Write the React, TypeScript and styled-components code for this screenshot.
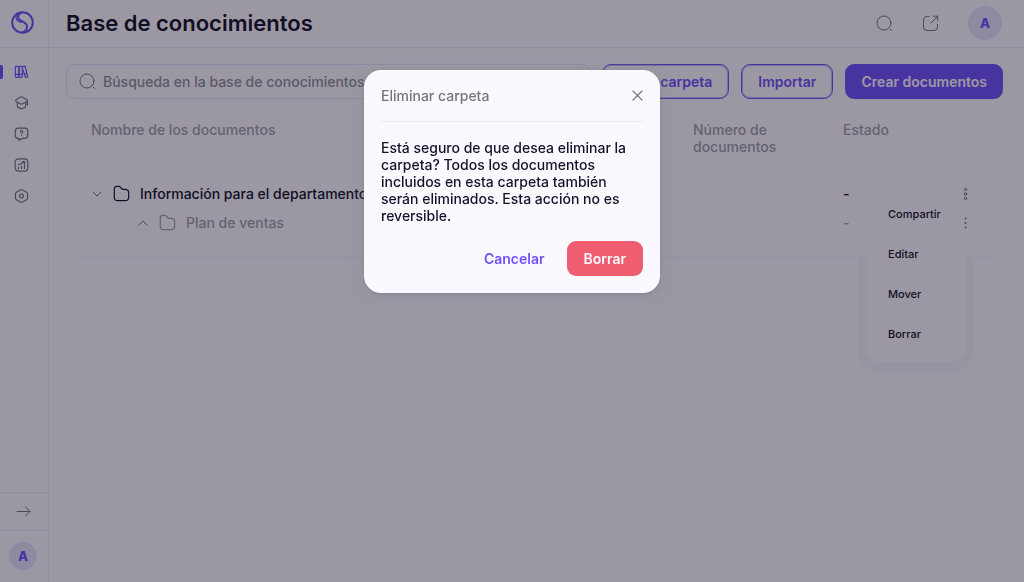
import React from "react";
import styled, { createGlobalStyle } from "styled-components";

const color = {
  surface: "#faf9ff",
  line: "#eae8fb",
  brand: "#7152fa",
  ink: "#16132a",
  muted: "#76757e",
  faint: "#a19fa8",
  danger: "#ef5d70",
};

const GlobalStyle = createGlobalStyle`
  *, *::before, *::after { box-sizing: border-box; }
  body {
    margin: 0;
    background: ${color.surface};
    color: ${color.ink};
    font: 500 14px/17px Inter, "Liberation Sans", sans-serif;
  }
  button, input { font: inherit; color: inherit; }
  button { border: 0; padding: 0; background: none; cursor: pointer; }
  svg { display: block; flex: none; fill: none; stroke: currentColor; stroke-linecap: round; stroke-linejoin: round; }
`;

const Shell = styled.div`
  display: flex;
  min-height: 100vh;
`;

const Sidebar = styled.aside`
  display: flex;
  flex-direction: column;
  flex: 0 0 49px;
  border-right: 1px solid ${color.line};
`;

const LogoLink = styled.a`
  display: flex;
  align-items: center;
  height: 48px;
  padding: 0 0 2px 10px;
  border-bottom: 1px solid ${color.line};
  color: ${color.brand};
`;

const SideNav = styled.nav`
  display: flex;
  flex-direction: column;
  flex: 1;
  gap: 15px;
  padding-top: 16px;
`;

const SideLink = styled.a<{ $active?: boolean }>`
  position: relative;
  display: flex;
  align-items: center;
  height: 16px;
  padding-left: 14px;
  color: ${(p) => (p.$active ? color.brand : color.muted)};
  &::before {
    content: "";
    display: ${(p) => (p.$active ? "block" : "none")};
    position: absolute;
    left: 0;
    width: 3px;
    height: 14px;
    border-radius: 0 2px 2px 0;
    background: ${color.brand};
  }
`;

const ExpandButton = styled.button`
  display: flex;
  align-items: center;
  height: 39px;
  padding-left: 16px;
  border-top: 1px solid ${color.line};
  border-bottom: 1px solid ${color.line};
  color: ${color.muted};
`;

const SideAccount = styled.div`
  padding: 11px 0 12px 9px;
`;

const Avatar = styled.button<{ $size: number }>`
  display: block;
  width: ${(p) => p.$size}px;
  height: ${(p) => p.$size}px;
  border-radius: 50%;
  background: #e5e1fb;
  color: ${color.brand};
  font-size: 13px;
  font-weight: 800;
`;

const Content = styled.div`
  flex: 1;
  min-width: 0;
`;

const Header = styled.header`
  display: flex;
  align-items: center;
  justify-content: space-between;
  height: 48px;
  padding: 0 22px 1px 17px;
  border-bottom: 1px solid ${color.line};
`;

const PageTitle = styled.h1`
  margin: 0;
  font-size: 22px;
  line-height: 28px;
  font-weight: 600;
`;

const HeaderTools = styled.div`
  display: flex;
  align-items: center;
  gap: 29px;
  color: ${color.muted};
`;

const Main = styled.main`
  padding: 16px 21px 0 17px;
`;

const Toolbar = styled.div`
  display: flex;
  gap: 12px;
`;

const SearchBox = styled.label`
  display: flex;
  align-items: center;
  flex: 1;
  gap: 7px;
  height: 35px;
  padding: 0 12px;
  border: 1px solid #e2dffb;
  border-radius: 9px;
  color: ${color.muted};
  input {
    flex: 1;
    min-width: 0;
    padding: 0;
    border: 0;
    outline: 0;
    background: none;
  }
  input::placeholder { color: #918f99; opacity: 1; }
`;

const Button = styled.button<{ $kind: "outline" | "solid" | "danger" | "text" }>`
  height: 35px;
  padding: 0 ${(p) => (p.$kind === "danger" ? 17 : 16)}px;
  border: ${(p) => (p.$kind === "outline" ? `1px solid ${color.brand}` : "0")};
  border-radius: 9px;
  background: ${(p) =>
    p.$kind === "solid" ? color.brand : p.$kind === "danger" ? color.danger : "transparent"};
  box-shadow: ${(p) => (p.$kind === "outline" ? "inset 0 0 0 1px rgba(113, 82, 250, 0.4)" : "none")};
  color: ${(p) => (p.$kind === "outline" || p.$kind === "text" ? color.brand : color.surface)};
  font-weight: 600;
  white-space: nowrap;
`;

const TableCard = styled.section`
  position: relative;
  margin-top: 5px;
  padding: 0 21px 20px 25px;
  border-radius: 20px;
  box-shadow: 0 2px 2px -1px #eceafa;
`;

const Table = styled.table`
  width: 100%;
  table-layout: fixed;
  border-collapse: collapse;
  th, td { padding: 0; text-align: left; font-weight: inherit; }
  th { height: 75px; padding-top: 17px; vertical-align: top; color: ${color.faint}; font-weight: 500; }
  th:nth-child(2) { width: 150px; }
  th:nth-child(3) { width: 114px; }
  th:nth-child(4) { width: 25px; }
`;

const Row = styled.tr<{ $muted?: boolean }>`
  height: 29px;
  color: ${(p) => (p.$muted ? color.faint : color.ink)};
`;

const NameCell = styled.div<{ $nested?: boolean }>`
  display: flex;
  align-items: center;
  gap: 10px;
  padding-left: ${(p) => (p.$nested ? 46 : 0)}px;
  white-space: nowrap;
`;

const ChevronIcon = styled.svg`
  color: ${color.muted};
`;

const IconButton = styled.button`
  display: block;
  color: ${color.muted};
`;

const RowMenuButton = styled(IconButton)`
  position: relative;
  z-index: 2;
  margin-left: 4px;
`;

const Menu = styled.div`
  position: absolute;
  z-index: 1;
  top: 82px;
  right: 37px;
  width: 101px;
  padding: 8px 0;
  border-radius: 14px;
  background: ${color.surface};
  box-shadow: 0 0 1px 0 #efedfa;
`;

/* Halo that shows only where the menu hangs below the card. */
const MenuHalo = styled.div`
  position: absolute;
  top: 155px;
  right: 30px;
  width: 115px;
  height: 112px;
  border-radius: 0 0 20px 20px;
  background: #f3f1fa;
`;

const MenuItem = styled.button`
  display: block;
  width: 100%;
  height: 40px;
  padding-left: 23px;
  font-size: 11px;
  text-align: left;
`;

const Backdrop = styled.div`
  position: fixed;
  inset: 0;
  z-index: 10;
  display: flex;
  justify-content: center;
  align-items: flex-start;
  padding-top: 70px;
  background: rgba(13, 8, 28, 0.4);
`;

const Dialog = styled.div`
  width: 296px;
  padding: 17px;
  border-radius: 17px;
  background: ${color.surface};
  box-shadow: 0 2px 8px 8px rgba(130, 130, 136, 0.16), 0 1px 3px rgba(80, 80, 90, 0.3);
`;

const DialogHeader = styled.div`
  display: flex;
  align-items: center;
  justify-content: space-between;
  height: 35px;
  padding-bottom: 17px;
  border-bottom: 1px solid ${color.line};
  color: ${color.muted};
  h2 { margin: 0; font-size: 14px; font-weight: 500; }
`;

const DialogText = styled.p`
  margin: 17px 0;
`;

const DialogActions = styled.div`
  display: flex;
  justify-content: flex-end;
  gap: 6px;
`;

const Search = () => (
  <svg width="17" height="17" viewBox="0 0 17 17">
    <circle cx="8" cy="8" r="7" />
    <path d="M14.2 14.2l1.3 1.3" />
  </svg>
);

const Folder = () => (
  <svg width="17" height="17" viewBox="0 0 17 17" strokeWidth="1.2">
    <path d="M1.300 4.500C1.300 2.200 2.200 1.300 4 1.300h1.600c1 0 1.500.3 2 1l1 1.300c.4.5.7.7 1.400.7H12c2.600 0 3.700 1 3.700 3.300v4.400c0 2.600-1.100 3.700-3.500 3.700H4.800c-2.400 0-3.500-1.100-3.500-3.500z" />
  </svg>
);

const Chevron = ({ up }: { up?: boolean }) => (
  <ChevronIcon width="12" height="12" viewBox="0 0 12 12">
    <path d={up ? "M2 8L6 4L10 8" : "M2 4L6 8L10 4"} />
  </ChevronIcon>
);

const Dots = ({ open }: { open?: boolean }) => (
  <svg width="8" height="14" viewBox="0 0 8 14" strokeWidth={open ? 1 : 0}>
    {[2.5, 7, 11.5].map((cy) => (
      <circle key={cy} cx="4.500" cy={cy} r={open ? 1.2 : 1} fill={open ? "none" : "currentColor"} />
    ))}
  </svg>
);

export default function App() {
  return (
    <>
      <GlobalStyle />
      <Shell>
        <Sidebar>
          <LogoLink href="#" aria-label="Inicio">
            <svg width="25" height="25" viewBox="0 0 25 25" strokeWidth="2">
              <circle cx="12.500" cy="12.500" r="10.300" />
              <path d="M11.500 2.600C8.800 3.800 7.800 5.500 8.200 7.700c.8 4.200 8.400 3.400 8.800 8.600.2 2.600-1.300 4.600-4 5.900" />
              <path d="M8 4C4.500 7.500 5.800 10.800 11.500 12.300" strokeWidth="1.200" />
            </svg>
          </LogoLink>
          <SideNav aria-label="Principal">
            <SideLink href="#" $active aria-label="Base de conocimientos">
              <svg width="15" height="14" viewBox="0 0 15 14" strokeWidth="1.200">
                <rect x="1.300" y="1.300" width="3.700" height="11" rx="1" />
                <rect x="5" y="1.300" width="3.300" height="11" rx="1" />
                <path d="M1.300 9.300h7M8.800 1.600l2.300-.4 2.600 10.700-2.300.5-2.600-8M10 9.300l3.200-.7" />
              </svg>
            </SideLink>
            <SideLink href="#" aria-label="Formación">
              <svg width="15" height="14" viewBox="0 0 15 14" strokeWidth="1.200">
                <path d="M6.200 1.200q1.300-.7 2.600 0l3.900 2.200q1.400 1 0 2L8.800 7.800q-1.300.8-2.600 0L2.300 5.400q-1.400-1 0-2zM3.300 6.300v3.500q0 1.300 1.200 1.800l2 .9q1 .4 2 0l2-.9q1.200-.5 1.200-1.800V6.300M13.500 5v3.800" />
              </svg>
            </SideLink>
            <SideLink href="#" aria-label="Ayuda">
              <svg width="15" height="14" viewBox="0 0 15 14" strokeWidth="1.200">
                <path d="M4 1.200h7q2.700 0 2.700 2.700v4.800q0 2.700-2.700 2.700H8.500L4.700 13.200v-1.800H4q-2.700 0-2.700-2.700V3.900Q1.300 1.200 4 1.200z" />
                <path d="M6.400 4.700c0-1.500 2.300-1.300 2.300.1 0 .9-1.200.9-1.200 1.900M7.500 8.500v.1" />
              </svg>
            </SideLink>
            <SideLink href="#" aria-label="Informes">
              <svg width="15" height="14" viewBox="0 0 15 14" strokeWidth="1.200">
                <rect x="1.200" y=".8" width="12.600" height="12.400" rx="3.200" />
                <path d="M4.500 10.500V9.300M7.500 10.500V8M10.500 10.500V6.500M4.300 6.700C7 6.300 8.600 5.300 10.200 3.500M8.500 3.500h2v2" />
              </svg>
            </SideLink>
            <SideLink href="#" aria-label="Ajustes">
              <svg width="15" height="14" viewBox="0 0 15 14" strokeWidth="1.200">
                <path d="M6.400 1q1.100-.6 2.200 0l3.900 2.200q1.100.7 1.100 1.900v3.800q0 1.200-1.100 1.900L8.600 13q-1.100.6-2.200 0l-3.900-2.200Q1.400 10.100 1.400 8.900V5.100q0-1.200 1.100-1.900z" />
                <circle cx="7.500" cy="7" r="1.900" />
              </svg>
            </SideLink>
          </SideNav>
          <ExpandButton aria-label="Expandir menú">
            <svg width="15" height="13" viewBox="0 0 15 13">
              <path d="M1 6.500h13M9.500 2L14 6.500L9.500 11" />
            </svg>
          </ExpandButton>
          <SideAccount>
            <Avatar $size={28} aria-label="Cuenta">A</Avatar>
          </SideAccount>
        </Sidebar>
        <Content>
          <Header>
            <PageTitle>Base de conocimientos</PageTitle>
            <HeaderTools>
              <IconButton aria-label="Buscar"><Search /></IconButton>
              <IconButton aria-label="Abrir en otra ventana">
                <svg width="17" height="17" viewBox="0 0 17 17">
                  <path d="M7 1.500H5Q1.500 1.500 1.500 5v7q0 3.500 3.500 3.500h7q3.500 0 3.500-3.500V9.500M9 8l6.500-6.500M11.500 1.200h4.200v4.200" />
                </svg>
              </IconButton>
              <Avatar $size={34} aria-label="Perfil">A</Avatar>
            </HeaderTools>
          </Header>
          <Main>
            <Toolbar>
              <SearchBox>
                <Search />
                <input aria-label="Buscar documentos" placeholder="Búsqueda en la base de conocimientos" />
              </SearchBox>
              <Button $kind="outline">Crear carpeta</Button>
              <Button $kind="outline">Importar</Button>
              <Button $kind="solid">Crear documentos</Button>
            </Toolbar>
            <TableCard>
              <Table>
                <thead>
                  <tr>
                    <th scope="col">Nombre de los documentos</th>
                    <th scope="col">Número de documentos</th>
                    <th scope="col">Estado</th>
                    <th aria-label="Acciones" />
                  </tr>
                </thead>
                <tbody>
                  <Row>
                    <td><NameCell><Chevron /><Folder />Información para el departamento</NameCell></td>
                    <td />
                    <td>-</td>
                    <td><RowMenuButton aria-label="Opciones"><Dots open /></RowMenuButton></td>
                  </Row>
                  <Row $muted>
                    <td><NameCell $nested><Chevron up /><Folder />Plan de ventas</NameCell></td>
                    <td />
                    <td>-</td>
                    <td><RowMenuButton aria-label="Opciones"><Dots /></RowMenuButton></td>
                  </Row>
                </tbody>
              </Table>
              <MenuHalo />
              <Menu>
                <MenuItem>Compartir</MenuItem>
                <MenuItem>Editar</MenuItem>
                <MenuItem>Mover</MenuItem>
                <MenuItem>Borrar</MenuItem>
              </Menu>
            </TableCard>
          </Main>
        </Content>
      </Shell>
      <Backdrop>
        <Dialog role="dialog" aria-modal="true" aria-labelledby="dialog-title">
          <DialogHeader>
            <h2 id="dialog-title">Eliminar carpeta</h2>
            <button aria-label="Cerrar">
              <svg width="11" height="11" viewBox="0 0 11 11" strokeWidth="1.200">
                <path d="M1 1l9 9M10 1l-9 9" />
              </svg>
            </button>
          </DialogHeader>
          <DialogText>
            Está seguro de que desea eliminar la carpeta? Todos los documentos incluidos en esta
            carpeta también serán eliminados. Esta acción no es reversible.
          </DialogText>
          <DialogActions>
            <Button $kind="text">Cancelar</Button>
            <Button $kind="danger">Borrar</Button>
          </DialogActions>
        </Dialog>
      </Backdrop>
    </>
  );
}
